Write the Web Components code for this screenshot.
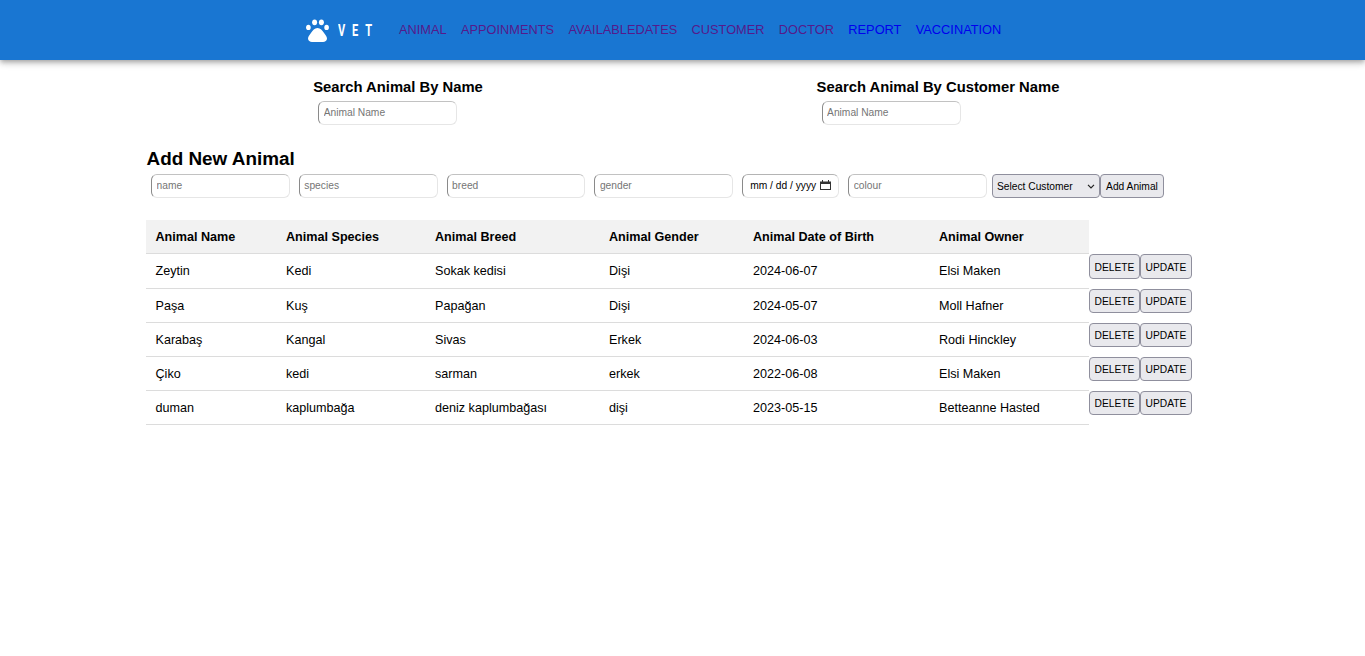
<!DOCTYPE html>
<html lang="en">
<head>
<meta charset="utf-8">
<title>VET</title>
<style>
    html, body {
        margin: 0;
        background: #fff;
        font-family: "Liberation Sans", Arial, sans-serif;
        color: #000;
    }
</style>
</head>
<body>
<vet-navbar></vet-navbar>
<vet-search-row>
    <vet-search-box label="Search Animal By Name"></vet-search-box>
    <vet-search-box label="Search Animal By Customer Name"></vet-search-box>
</vet-search-row>
<vet-add-form></vet-add-form>
<vet-animal-table></vet-animal-table>

<script>
const fieldBorder = `
    border: 1px solid #e6e6e6;
    border-top-color: #c2c2c2;
    border-left-color: #8a8a8a;
    border-radius: 6px;
`;

const inputStyles = `
    input {
        box-sizing: border-box;
        height: 24px;
        margin: 0;
        padding: 0 4.5px 2px;
        font: 10.24px "Liberation Sans", Arial, sans-serif;
        color: #000;
        background: #fff;
        ${fieldBorder}
        outline: none;
    }
    input::placeholder {
        color: #757575;
    }
`;

const buttonStyles = `
    button, select {
        box-sizing: border-box;
        height: 24px;
        margin: 0;
        font: 10.24px "Liberation Sans", Arial, sans-serif;
        color: #000;
        background: #e9e9ed;
        border: 1px solid #8f8f9d;
        border-radius: 4px;
    }
`;

customElements.define("vet-navbar", class extends HTMLElement {
    constructor() {
        super();
        let shadowRoot = this.attachShadow({ mode: "open" });
        let links = [
            ["ANIMAL", true],
            ["APPOINMENTS", true],
            ["AVAILABLEDATES", true],
            ["CUSTOMER", true],
            ["DOCTOR", true],
            ["REPORT", false],
            ["VACCINATION", false]
        ];
        shadowRoot.innerHTML = `<style>
        :host {
            display: flex;
            align-items: center;
            box-sizing: border-box;
            height: 60px;
            padding-left: 306px;
            background: #1976d2;
            box-shadow: 0 2px 4px -1px rgba(0,0,0,.2), 0 4px 5px 0 rgba(0,0,0,.14), 0 1px 10px 0 rgba(0,0,0,.12);
        }
        svg {
            display: block;
            width: 23px;
            height: 23px;
        }
        .brand {
            box-sizing: border-box;
            width: 63px;
            padding-left: 9px;
            font: 700 17px Roboto, sans-serif;
            letter-spacing: 10.5px;
            color: #fff;
            white-space: nowrap;
            transform: scaleX(.65);
            transform-origin: 9px 0;
        }
        nav {
            display: flex;
            gap: 14.3px;
            padding-bottom: 2px;
            margin-left: 7px;
        }
        a {
            font-size: 12.8px;
            color: #0000ee;
            text-decoration: none;
        }
        a.seen {
            color: #551a8b;
        }
        </style>
        <svg viewBox="0 0 23 23" aria-hidden="true">
            <g fill="#fff">
                <ellipse cx="2.400" cy="8.400" rx="2.300" ry="2.700"/>
                <ellipse cx="8.600" cy="3.300" rx="2.500" ry="2.900"/>
                <ellipse cx="15.400" cy="3.300" rx="2.500" ry="2.900"/>
                <ellipse cx="20.600" cy="8.400" rx="2.300" ry="2.700"/>
                <path d="M11.500 9c3 0 4.800 2.300 6.200 4.600 1.300 2.100 3.300 3.800 3.300 6 0 2.400-2 3.400-4 3.400H6c-2 0-4-1-4-3.400 0-2.200 2-3.900 3.300-6C6.700 11.300 8.500 9 11.500 9z"/>
            </g>
        </svg>
        <div class="brand">VET</div>
        <nav>${links.map(([name, seen]) => `<a href="#" class="${seen ? "seen" : ""}">${name}</a>`).join("")}</nav>`;
    }
});

customElements.define("vet-search-row", class extends HTMLElement {
    constructor() {
        super();
        let shadowRoot = this.attachShadow({ mode: "open" });
        shadowRoot.innerHTML = `<style>
        :host {
            display: grid;
            grid-template-columns: 540px 540px;
            justify-items: center;
            padding: 18px 0 0 128px;
        }
        </style>
        <slot></slot>`;
    }
});

customElements.define("vet-search-box", class extends HTMLElement {
    constructor() {
        super();
        let shadowRoot = this.attachShadow({ mode: "open" });
        shadowRoot.innerHTML = `<style>
        ${inputStyles}
        :host {
            display: block;
        }
        h3 {
            margin: 0 0 5px;
            font-size: 14.8px;
            line-height: 18px;
            font-weight: 700;
        }
        input {
            display: block;
            width: 139px;
            margin-left: 5px;
        }
        </style>
        <h3>${this.getAttribute("label")}</h3>
        <input type="text" placeholder="Animal Name">`;
    }
});

customElements.define("vet-date-field", class extends HTMLElement {
    constructor() {
        super();
        let shadowRoot = this.attachShadow({ mode: "open" });
        shadowRoot.innerHTML = `<style>
        :host {
            display: flex;
            align-items: center;
            justify-content: space-between;
            box-sizing: border-box;
            width: 97px;
            height: 24px;
            margin-right: 9px;
            padding: 0 7px 2px 7px;
            font-size: 10.24px;
            background: #fff;
            ${fieldBorder}
            border-top-color: #b4b4b4;
            white-space: nowrap;
        }
        svg {
            display: block;
            flex: none;
            width: 11px;
            height: 11px;
        }
        </style>
        <span>mm / dd / yyyy</span>
        <svg viewBox="0 0 11 11" aria-hidden="true">
            <path fill="#333" d="M2 0h1v1.500h5V0h1v1.500h2V10H0V1.500h2zM1 4v5h9V4z"/>
        </svg>`;
    }
});

customElements.define("vet-customer-select", class extends HTMLElement {
    constructor() {
        super();
        let shadowRoot = this.attachShadow({ mode: "open" });
        shadowRoot.innerHTML = `<style>
        ${buttonStyles}
        :host {
            display: block;
            position: relative;
            width: 108px;
            height: 24px;
            margin-left: -4px;
        }
        select {
            display: block;
            width: 100%;
            padding: 0 0 0 4px;
            appearance: none;
        }
        svg {
            position: absolute;
            right: 5px;
            top: 10px;
            width: 8px;
            height: 5px;
            pointer-events: none;
        }
        </style>
        <select><option>Select Customer</option></select>
        <svg viewBox="0 0 8 5" aria-hidden="true">
            <path fill="none" stroke="#222" stroke-width="1.200" d="M1 .8 4 3.800 7 .8"/>
        </svg>`;
    }
});

customElements.define("vet-add-form", class extends HTMLElement {
    constructor() {
        super();
        let shadowRoot = this.attachShadow({ mode: "open" });
        let textInput = name => `<input type="text" placeholder="${name}">`;
        shadowRoot.innerHTML = `<style>
        ${inputStyles}
        ${buttonStyles}
        :host {
            display: block;
            padding: 23px 0 0 146.5px;
        }
        h2 {
            margin: 0 0 4px;
            font-size: 18.9px;
            line-height: 22px;
            font-weight: 700;
        }
        .fields {
            display: flex;
            padding-left: 4.5px;
        }
        input {
            width: 138.8px;
            margin-right: 9px;
        }
        button {
            width: 64px;
            padding: 0;
        }
        </style>
        <h2>Add New Animal</h2>
        <div class="fields">
            ${textInput("name")}
            ${textInput("species")}
            ${textInput("breed")}
            ${textInput("gender")}
            <vet-date-field></vet-date-field>
            ${textInput("colour")}
            <vet-customer-select></vet-customer-select>
            <button type="button">Add Animal</button>
        </div>`;
    }
});

customElements.define("vet-animal-table", class extends HTMLElement {
    constructor() {
        super();
        let shadowRoot = this.attachShadow({ mode: "open" });
        let heads = ["Animal Name", "Animal Species", "Animal Breed", "Animal Gender", "Animal Date of Birth", "Animal Owner"];
        let rows = [
            ["Zeytin", "Kedi", "Sokak kedisi", "Dişi", "2024-06-07", "Elsi Maken"],
            ["Paşa", "Kuş", "Papağan", "Dişi", "2024-05-07", "Moll Hafner"],
            ["Karabaş", "Kangal", "Sivas", "Erkek", "2024-06-03", "Rodi Hinckley"],
            ["Çiko", "kedi", "sarman", "erkek", "2022-06-08", "Elsi Maken"],
            ["duman", "kaplumbağa", "deniz kaplumbağası", "dişi", "2023-05-15", "Betteanne Hasted"]
        ];
        shadowRoot.innerHTML = `<style>
        ${buttonStyles}
        :host {
            display: block;
            padding: 22px 0 0 146px;
        }
        table {
            border-collapse: collapse;
            table-layout: fixed;
            width: 1046px;
            font-size: 12.6px;
        }
        th, td {
            box-sizing: border-box;
            height: 34px;
            padding: 0 9.5px;
            text-align: left;
            border-bottom: 1px solid #dcdcdc;
        }
        th {
            height: 33px;
            padding-top: 2px;
            background: #f2f2f2;
            font-weight: 700;
        }
        tbody tr:first-child td {
            height: 35px;
            padding-top: 1px;
        }
        tbody tr + tr td {
            padding-top: 1px;
        }
        td.actions, tbody tr td.actions, tbody tr + tr td.actions {
            padding: 1px 0 0;
            border: 0;
            vertical-align: top;
            white-space: nowrap;
            font-size: 0;
        }
        button {
            height: 25px;
            padding: 1px 0 0;
        }
        tbody tr + tr button {
            height: 24px;
            padding: 0;
        }
        .delete { width: 51px; }
        .update { width: 52px; }
        </style>
        <table>
            <colgroup>
                <col style="width:130.5px"><col style="width:149px"><col style="width:174px">
                <col style="width:144px"><col style="width:186px"><col style="width:159.5px"><col style="width:103px">
            </colgroup>
            <thead><tr>${heads.map(head => `<th>${head}</th>`).join("")}</tr></thead>
            <tbody>
                ${rows.map(row => `<tr>
                    ${row.map(cell => `<td>${cell}</td>`).join("")}
                    <td class="actions"><button class="delete" type="button">DELETE</button><button class="update" type="button">UPDATE</button></td>
                </tr>`).join("")}
            </tbody>
        </table>`;
    }
});
</script>
</body>
</html>
